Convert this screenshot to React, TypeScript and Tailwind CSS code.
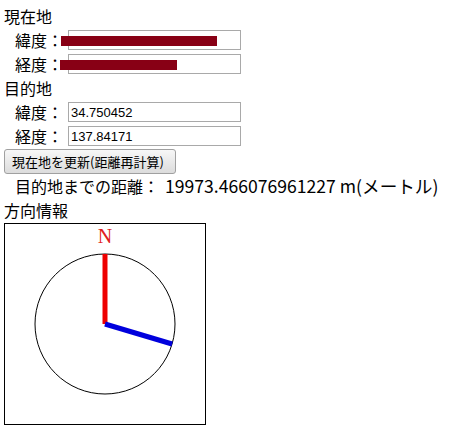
import React from "react";

const jp = "font-['Noto_Sans_CJK_JP','Noto_Sans',sans-serif]";

function CoordRow({ label, value }: { label: string; value: string }) {
  return (
    <div className="flex h-[24px] items-center pl-[11px]">
      <span className="w-[53px] text-[16px] leading-[24px]">{label}</span>
      <input
        readOnly
        value={value}
        className="h-[20px] w-[173px] border border-[#a9a9a9] bg-white px-[2px] font-['Liberation_Sans',Arial,sans-serif] text-[13px] text-black outline-none"
      />
    </div>
  );
}

function Compass() {
  const angle = (106.6 * Math.PI) / 180;
  const bx = 100 + 70 * Math.sin(angle);
  const by = 100 - 70 * Math.cos(angle);
  return (
    <div className="mt-[1px] h-[202px] w-[202px] border border-black bg-white">
      <svg width="200" height="200" viewBox="0 0 200 200">
        <circle cx="100" cy="100" r="70" fill="none" stroke="#000" strokeWidth="1" />
        <text
          x="100"
          y="19"
          textAnchor="middle"
          fill="#e02020"
          fontSize="20"
          fontFamily="'Liberation Serif', serif"
        >
          N
        </text>
        <line x1="100" y1="100" x2="100" y2="30" stroke="#ee0000" strokeWidth="5" />
        <line x1="100" y1="100" x2={bx} y2={by} stroke="#0000dd" strokeWidth="5" />
      </svg>
    </div>
  );
}

export default function App() {
  return (
    <div className={`relative min-h-[431px] bg-white pl-[4px] pt-[4px] text-black ${jp}`}>
      <div className="h-[24px] text-[16px] leading-[24px]">現在地</div>
      <CoordRow label="緯度：" value="" />
      <CoordRow label="経度：" value="" />
      <div className="h-[24px] text-[16px] leading-[24px]">目的地</div>
      <CoordRow label="緯度：" value="34.750452" />
      <CoordRow label="経度：" value="137.84171" />
      <button className="mt-[1px] h-[25px] w-[172px] rounded-[3px] border border-[#a0a0a0] bg-gradient-to-b from-[#f7f7f7] to-[#dcdcdc] px-[7px] text-left text-[13px] leading-[23px] text-black">
        現在地を更新(距離再計算)
      </button>
      <div className="flex h-[24px] items-center pl-[11px] text-[16px] leading-[24px]">
        <span className="w-[150px]">目的地までの距離：</span>
        <span className="text-[17.6px]">19973.466076961227 m(メートル)</span>
      </div>
      <div className="h-[24px] text-[16px] leading-[24px]">方向情報</div>
      <Compass />

      {/* redaction marks over the current position fields */}
      <div className="absolute left-[61px] top-[36px] h-[10px] w-[156px] bg-[#880015]" />
      <div className="absolute left-[60px] top-[60px] h-[10px] w-[117px] bg-[#880015]" />
    </div>
  );
}
